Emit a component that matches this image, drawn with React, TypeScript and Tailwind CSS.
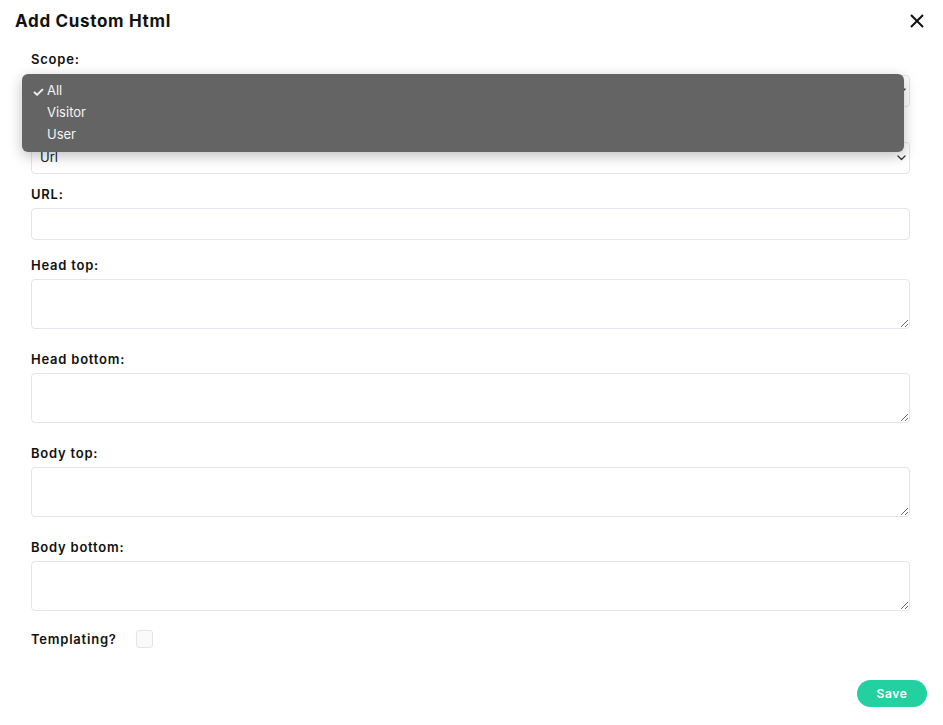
import { useState } from "react";

const fieldBorder = "border border-[#e4e4ee]";

function Label({ children, className = "" }: { children?: React.ReactNode; className?: string }) {
    return (
        <label className={`block h-5 text-[13px] font-semibold leading-5 tracking-[0.06em] text-[#111] ${className}`}>
            {children}
        </label>
    );
}

function Chevron() {
    return (
        <svg className="h-[6px] w-[9px] text-[#333]" viewBox="0 0 9 6" fill="none">
            <path d="M1 1l3.5 3.5L8 1" stroke="currentColor" strokeWidth={1.3} strokeLinecap="round" strokeLinejoin="round" />
        </svg>
    );
}

function SelectBox({ value }: { value?: string }) {
    return (
        <div className={`flex h-8 items-center justify-between rounded-[4px] ${fieldBorder} bg-white pl-2 pr-[3px]`}>
            <span className="text-[13px] text-[#222]">{value}</span>
            <Chevron />
        </div>
    );
}

function Area() {
    return (
        <textarea className={`mt-1 block h-[50px] w-full rounded-[4px] ${fieldBorder} bg-white`} />
    );
}

export default function App() {
    const [templating, setTemplating] = useState(false);
    const options = ["All", "Visitor", "User"];

    return (
        <div className="relative min-h-[725px] w-[943px] bg-white font-['Inter',sans-serif]">
            {/* Header */}
            <div className="flex items-center justify-between pl-[15px] pr-[19px] pt-[9px]">
                <h1 className="text-[17px] font-bold leading-6 tracking-[0.04em] text-[#111]">Add Custom Html</h1>
                <button className="text-[#111]">
                    <svg className="h-[14px] w-[14px]" viewBox="0 0 14 14" fill="none">
                        <path d="M1 1l12 12M13 1L1 13" stroke="currentColor" strokeWidth={2} />
                    </svg>
                </button>
            </div>

            {/* Form */}
            <div className="pl-[31px] pr-[33px] pt-4">
                <Label className="mb-[6px]">Scope:</Label>
                {/* value hidden under the open menu */}
                <SelectBox />

                <Label className="mb-1 mt-[11px]" />
                <SelectBox value="Url" />

                <Label className="mb-1 mt-[10px]">URL:</Label>
                <input className={`block h-8 w-full rounded-[4px] ${fieldBorder} bg-white`} />

                <Label className="mt-[15px]">Head top:</Label>
                <Area />

                <Label className="mt-[20px]">Head bottom:</Label>
                <Area />

                <Label className="mt-[20px]">Body top:</Label>
                <Area />

                <Label className="mt-[20px]">Body bottom:</Label>
                <Area />

                <div className="mt-[18px] flex items-center gap-[19px]">
                    <Label>Templating?</Label>
                    <button
                        onClick={() => setTemplating(!templating)}
                        className={`h-[18px] w-[17px] rounded-[3px] ${fieldBorder} bg-[#fafafa]`}
                    />
                </div>
            </div>

            <div className="flex justify-end pr-4 pt-[31px]">
                <button className="h-[27px] w-[70px] rounded-full bg-[#22d0a0] text-[12px] font-semibold tracking-[0.05em] text-white">
                    Save
                </button>
            </div>

            {/* Open native select menu */}
            <div className="absolute left-[22px] top-[74px] h-[78px] w-[882px] rounded-[6px] bg-[#646464] pt-[6px] shadow-[0_4px_14px_rgba(0,0,0,0.25)]">
                {options.map((o, i) => (
                    <div key={o} className="flex h-[22px] items-center text-[13px] text-[#f4f4f4]">
                        <span className="w-[25px] pl-[10px] text-[14px] font-semibold">{i === 0 ? "✓" : ""}</span>
                        <span>{o}</span>
                    </div>
                ))}
            </div>
        </div>
    );
}
